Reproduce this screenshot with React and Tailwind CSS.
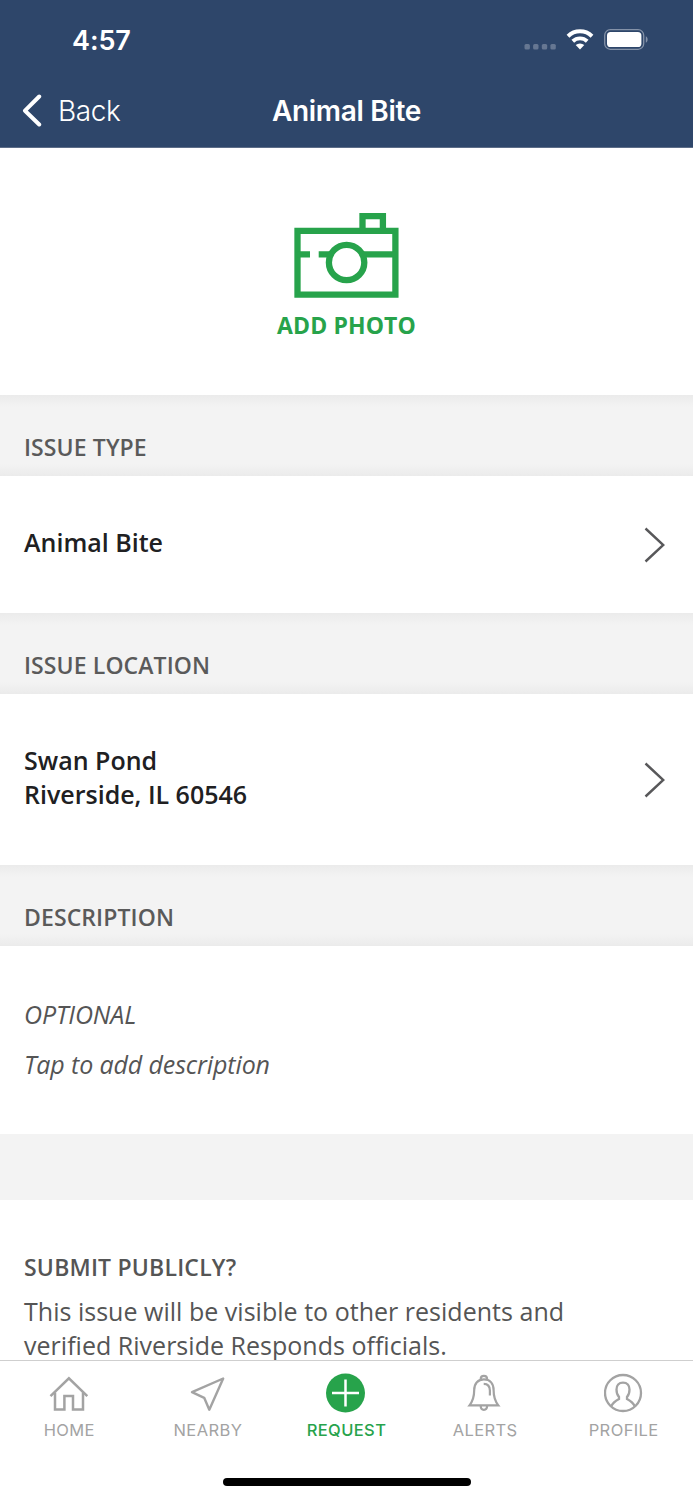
import clsx from 'clsx'

const GREEN = '#27a34b'

function StatusBar() {
  return (
    <div className="flex h-[78px] items-center justify-between pl-[72px] pr-[44px] pt-[2px]">
      <span className="text-[27px] font-semibold leading-none tracking-[-0.1px]">4:57</span>
      <div className="flex items-center">
        <svg width="34" height="22" viewBox="0 0 34 22" fill="#667792">
          <rect x="1.5" y="15" width="5.4" height="5.4" rx="1.5" />
          <rect x="10.1" y="15" width="5.4" height="5.4" rx="1.5" />
          <rect x="18.8" y="15" width="5.4" height="5.4" rx="1.5" />
          <rect x="27.4" y="15" width="5.4" height="5.4" rx="1.5" />
        </svg>
        <svg className="ml-[9px]" width="28" height="22" viewBox="0 0 28 22" fill="none" stroke="#fff">
          <path d="M2 7.2a17.3 17.3 0 0 1 24 0" strokeWidth="4" />
          <path d="M6.8 12.2a10.6 10.6 0 0 1 14.4 0" strokeWidth="3.9" />
          <path d="M14 20.4l-4.3-4.3a6.3 6.3 0 0 1 8.6 0z" fill="#fff" stroke="none" />
        </svg>
        <svg className="ml-[9px]" width="46" height="22" viewBox="0 0 46 22" fill="none">
          <rect x="1.7" y="0.7" width="39" height="19.6" rx="5.6" stroke="#8492a8" strokeWidth="1.3" />
          <rect x="4" y="3" width="34.4" height="15" rx="3.6" fill="#fff" />
          <path d="M42.8 7.2c2.4.9 2.4 5.6 0 6.5z" fill="#8492a8" />
        </svg>
      </div>
    </div>
  )
}

function Header() {
  return (
    <header className="h-[148px] border-b border-[#5d6d88] bg-[#2e466a] font-[Inter,sans-serif] text-white">
      <StatusBar />
      <div className="grid h-[66px] grid-cols-3 items-center">
        <button className="flex items-center pl-[22px]">
          <svg width="20" height="34" viewBox="0 0 20 34" fill="none" stroke="#fff" strokeWidth="4" strokeLinecap="round" strokeLinejoin="round">
            <path d="M17.2 2.5L3 16.7L17.2 30.5" />
          </svg>
          <span className="ml-[16px] text-[28px] font-light leading-none tracking-[-0.4px]">Back</span>
        </button>
        <h1 className="text-center text-[28px] font-semibold leading-none tracking-[-0.3px]">Animal Bite</h1>
      </div>
    </header>
  )
}

function CameraIcon() {
  return (
    <svg width="106" height="86" viewBox="0 0 106 86" fill="none" stroke={GREEN} strokeWidth="6.3">
      <path d="M3.5 17.9h97.9v63.7H3.5z" />
      <path d="M68.5 18V3.2h20.4V18" />
      <path d="M3.3 41.3h12.7M24.7 41.3h12M69.3 41.3h32" />
      <circle cx="52.6" cy="49.5" r="17.7" />
    </svg>
  )
}

function SectionTitle({ children }) {
  return (
    <div className="flex h-full flex-col justify-between">
      <div className="h-3 bg-linear-to-b from-[#ebebeb] to-[#f3f3f3]" />
      <h2 className="px-6 pt-[23px] text-[23px] font-semibold leading-none tracking-[0.1px] text-[#5a5a5a]">{children}</h2>
      <div className="h-3 bg-linear-to-b from-[#f3f3f3] to-[#ebebeb]" />
    </div>
  )
}

function Chevron() {
  return (
    <svg width="22" height="36" viewBox="0 0 22 36" fill="none" stroke="#58585a" strokeWidth="2.4">
      <path d="M2.5 1.5L20.3 18L2.5 34.5" />
    </svg>
  )
}

function HomeIcon() {
  return (
    <svg width="40" height="40" viewBox="0 0 40 40" fill="none" stroke="currentColor" strokeWidth="2.5">
      <path d="M1.5 23.2L19.9 5.3L38.3 23.2" />
      <path d="M6 19.5v17h9.4V22.9h8.6v13.6H34V19.5" />
    </svg>
  )
}

function NearbyIcon() {
  return (
    <svg width="40" height="40" viewBox="0 0 40 40" fill="none" stroke="currentColor" strokeWidth="2.4" strokeLinejoin="round">
      <path d="M35.2 5.5L4 19.2L16.2 24.8L21.3 36.7Z" />
    </svg>
  )
}

function RequestIcon() {
  return (
    <svg width="40" height="40" viewBox="0 0 40 40" fill="none">
      <circle cx="19.5" cy="20.1" r="19.5" fill={GREEN} />
      <path d="M19.5 6.6v27M6 20.1h27" stroke="#fff" strokeWidth="2.5" />
    </svg>
  )
}

function AlertsIcon() {
  return (
    <svg width="40" height="40" viewBox="0 0 40 40" fill="none" stroke="currentColor" strokeWidth="2.2">
      <path d="M4.5 32.4c3.7-4.6 4.7-8.7 4.7-15.3C9.2 10.5 13 6.3 18.9 6.3s9.7 4.2 9.7 10.8c0 6.6 1 10.7 4.7 15.3z" />
      <path d="M15.7 6.2c0-4.4 6.4-4.4 6.4 0M15.7 32.8c0 5.4 6.4 5.4 6.4 0" />
      <path d="M18.7 10.8c4.5 0 6.2 3 6.2 6.8v5" />
    </svg>
  )
}

function ProfileIcon() {
  return (
    <svg width="40" height="40" viewBox="0 0 40 40" fill="none" stroke="currentColor" strokeWidth="2.3">
      <circle cx="19" cy="20" r="18" />
      <path d="M7.2 33.4c1.8-4 4-5.3 7.8-7.3v-2.2c-2-1.8-2.5-4.4-2.5-7.3 0-4 2.3-7 6.5-7s6.5 3 6.5 7c0 2.9-.5 5.5-2.5 7.3v2.2c3.8 2 6 3.3 7.8 7.3" />
    </svg>
  )
}

const tabs = [
  { label: 'HOME', Icon: HomeIcon },
  { label: 'NEARBY', Icon: NearbyIcon },
  { label: 'REQUEST', Icon: RequestIcon, active: true },
  { label: 'ALERTS', Icon: AlertsIcon },
  { label: 'PROFILE', Icon: ProfileIcon },
]

function TabBar() {
  return (
    <nav className="h-[140px] border-t border-[#cfcfcf] font-[Inter,sans-serif]">
      <div className="flex pt-3">
        {tabs.map(({ label, Icon, active }) => (
          <button
            key={label}
            className={clsx('flex flex-1 flex-col items-center', active ? 'text-[#27a34b]' : 'text-[#a3a3a3]')}
          >
            <Icon />
            <span className={clsx('mt-[8px] text-[16.5px] leading-[18px] tracking-[0.4px]', active && 'font-medium')}>{label}</span>
          </button>
        ))}
      </div>
      <div className="mx-auto mt-[39px] h-[8px] w-[248px] rounded-full bg-black" />
    </nav>
  )
}

export default function App() {
  return (
    <div className="flex h-[1500px] w-[693px] flex-col overflow-hidden bg-white font-['Open_Sans',sans-serif]">
      <Header />

      <button className="flex h-[247px] flex-col items-center pt-[65px]">
        <CameraIcon />
        <span className="mt-[15px] text-[23px] font-bold leading-none tracking-[0.1px] text-[#27a34b]">ADD PHOTO</span>
      </button>

      <div className="h-[81px] bg-[#f3f3f3]">
        <SectionTitle>ISSUE TYPE</SectionTitle>
      </div>
      <div className="flex h-[137px] items-center justify-between pl-6 pr-[28px] text-[25px] font-semibold leading-[34px] text-[#202022]">
        <p className="pb-[5px]">Animal Bite</p>
        <Chevron />
      </div>

      <div className="h-[81px] bg-[#f3f3f3]">
        <SectionTitle>ISSUE LOCATION</SectionTitle>
      </div>
      <div className="flex h-[171px] items-center justify-between pl-6 pr-[28px] text-[25px] font-semibold leading-[34px] text-[#202022]">
        <p className="pb-[5px]">
          Swan Pond
          <br />
          Riverside, IL 60546
        </p>
        <Chevron />
      </div>

      <div className="h-[81px] bg-[#f3f3f3]">
        <SectionTitle>DESCRIPTION</SectionTitle>
      </div>
      <div className="h-[188px] px-6 pt-[51px] text-[25px] italic leading-[34px] tracking-[-0.12px] text-[#555]">
        <p>OPTIONAL</p>
        <p className="mt-4">Tap to add description</p>
      </div>

      <div className="h-[66px] bg-[#f3f3f3]" />

      <div className="h-[160px] px-6 pt-[50px] text-[#555]">
        <h2 className="text-[23px] font-semibold leading-[34px] tracking-[0.2px]">SUBMIT PUBLICLY?</h2>
        <p className="mt-[10px] text-[25px] leading-[34px] tracking-[0.02px]">
          This issue will be visible to other residents and
          <br />
          verified Riverside Responds officials.
        </p>
      </div>

      <TabBar />
    </div>
  )
}
